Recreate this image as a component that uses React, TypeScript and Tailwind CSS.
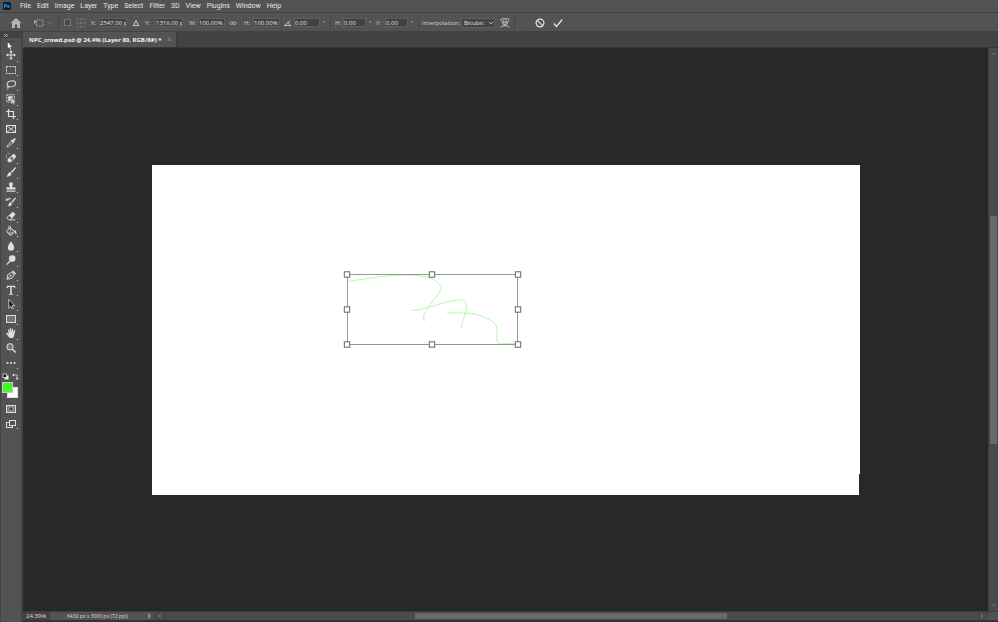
import React, { useState } from "react";

const menus = ["File", "Edit", "Image", "Layer", "Type", "Select", "Filter", "3D", "View", "Plugins", "Window", "Help"];

type IconProps = { children: React.ReactNode; className?: string; box?: string };

function Icon({ children, className = "size-3", box = "0 0 12 12" }: IconProps) {
  return (
    <svg viewBox={box} className={`${className} shrink-0`} fill="none" stroke="currentColor" strokeWidth="1" aria-hidden="true">
      {children}
    </svg>
  );
}

const solid = { fill: "currentColor", stroke: "none" };

const tools: { name: string; flyout: boolean; art: React.ReactNode }[] = [
  {
    name: "Move",
    flyout: true,
    art: (
      <>
        <path d="M6 2v8M2 6h8" />
        <path {...solid} d="M6 1l1.8 2.2H4.2zM6 11l1.8-2.2H4.2zM1 6l2.2-1.8v3.6zM11 6L8.8 4.2v3.6z" />
      </>
    ),
  },
  { name: "Rectangular marquee", flyout: true, art: <rect x="1.5" y="2.5" width="9" height="7" strokeDasharray="2 1" /> },
  {
    name: "Lasso",
    flyout: true,
    art: (
      <>
        <ellipse cx="6.4" cy="4.8" rx="4.3" ry="2.9" transform="rotate(-14 6.4 4.8)" />
        <path d="M3 6.6C1.4 7.3 2 9 3.3 8.4S3.6 6.6 2.8 7M3 8.5c.2 1-.2 1.7-1 2.2" strokeWidth=".8" />
      </>
    ),
  },
  {
    name: "Object selection",
    flyout: true,
    art: (
      <>
        <rect x="1.8" y="1.8" width="7.4" height="7.4" strokeWidth=".9" strokeDasharray="2 .8" />
        <rect {...solid} x="3.2" y="3.2" width="4.4" height="4.6" />
        <path d="M6 5v6.4l1.7-1.6 1.1 2 1.2-.6-1-1.9h2.2z" fill="currentColor" stroke="#535353" strokeWidth=".5" />
      </>
    ),
  },
  { name: "Crop", flyout: true, art: <path d="M3.5 1v7.5H11M1 3.5h7.5V11" strokeWidth="1.2" /> },
  {
    name: "Frame",
    flyout: false,
    art: (
      <>
        <rect x="1.5" y="2.5" width="9" height="7" />
        <path d="M1.5 2.5l9 7M10.5 2.5l-9 7" strokeWidth=".9" />
      </>
    ),
  },
  {
    name: "Eyedropper",
    flyout: true,
    art: (
      <>
        <path d="M2 10l.5-1.7 4-4 1.3 1.3-4 4z" strokeWidth=".9" />
        <path {...solid} d="M5.8 3.3l1-.9.7.7L9 1.6c1-.8 2.2.4 1.4 1.4L8.9 4.500l.7.7-1 1z" />
      </>
    ),
  },
  {
    name: "Spot healing brush",
    flyout: true,
    art: (
      <>
        <rect {...solid} x="1.9" y="4.2" width="9.6" height="4.2" rx="1.6" transform="rotate(-42 6.700 6.300)" />
        <rect x="5.4" y="5" width="2.6" height="2.6" fill="#6b6b6b" stroke="none" transform="rotate(-42 6.700 6.300)" />
        <path d="M1.500 6V3.500A2.200 2.200 0 0 1 5.500 2.300" strokeWidth=".7" strokeDasharray="1 .6" />
      </>
    ),
  },
  {
    name: "Brush",
    flyout: true,
    art: <path {...solid} d="M10.800 1.200c.6.5-.2 1.600-3.800 5.700L5.700 5.700C9.400 2 10.300.900 10.800 1.200zM5.100 6.300l1.300 1.300c.1 2-2 3.400-5 3 1.200-.6 1-1.200 1.400-2.500.3-1.200 1.300-1.800 2.300-1.800z" />,
  },
  {
    name: "Clone stamp",
    flyout: true,
    art: <path {...solid} d="M6 1.200c1.200 0 2 .9 2 1.900 0 1.100-.9 1.600-.9 3.100h2.400c.7 0 1 .4 1 1v1.300h-9V7.200c0-.6.3-1 1-1h2.400C4.900 4.700 4 4.200 4 3.100c0-1 .8-1.900 2-1.900zM1.500 9.500h9v1.200h-9z" />,
  },
  {
    name: "History brush",
    flyout: true,
    art: (
      <>
        <path {...solid} d="M10.900 1.600c.4.500-.3 1.500-3.500 5.200L6.300 5.700C9.500 2.300 10.500 1.200 10.900 1.600zM5.700 6.300l1.200 1.200c0 1.900-1.800 3-4.300 2.700 1.100-.6.9-1.100 1.200-2.200.3-1.100 1-1.700 1.900-1.700z" />
        <path d="M1.200 3.600h3.300M6.300 3.200C5.200 2 3.500 2 2.600 3.300" strokeWidth=".9" />
        <path {...solid} d="M.8 2l.3 3L3.600 4z" />
      </>
    ),
  },
  {
    name: "Eraser",
    flyout: true,
    art: (
      <>
        <path {...solid} d="M7.700 1.700l3 2.600L7.200 8 4 5.300z" />
        <path d="M4 5.300L1.800 7.900l1.900 1.900h1.700L7.200 8zM5 9.900h5.500" strokeWidth=".9" />
      </>
    ),
  },
  {
    name: "Paint bucket",
    flyout: true,
    art: (
      <>
        <path d="M5 2.500l4.700 4-4 4.200L1.400 6.600z" />
        <path d="M2 6.700l7.300-.2-3.600 4z" fill="currentColor" fillOpacity=".45" stroke="none" />
        <path d="M5.600 6V2.200c0-1.600-2.200-1.400-2.200 0v1.600" strokeWidth=".8" />
        <path {...solid} d="M9.400 5c2 .6 2.300 2 1.900 4.700-1.300-.8-1.200-2.400-1.900-4.700z" />
      </>
    ),
  },
  { name: "Blur", flyout: true, art: <path {...solid} d="M6 1.200c1.500 2.500 3.200 4.200 3.200 6.200a3.200 3.200 0 0 1-6.400 0c0-2 1.700-3.700 3.200-6.200z" /> },
  {
    name: "Dodge",
    flyout: true,
    art: (
      <>
        <circle {...solid} cx="7.200" cy="4.600" r="3.300" />
        <path d="M5 7l-3.300 3.600" strokeWidth="1.300" />
      </>
    ),
  },
  {
    name: "Pen",
    flyout: true,
    art: (
      <>
        <path d="M2 10.200l.8-4.600L6.500 3.200 9.200 6 6.800 9.400z" />
        <path d="M2.200 10l3.300-3.300" strokeWidth=".8" />
        <circle {...solid} cx="5.700" cy="6.500" r=".9" />
        <path {...solid} d="M6.700 2.500l1.200-1.200 3.200 3.100L9.800 5.700z" />
      </>
    ),
  },
  { name: "Type", flyout: true, art: <path {...solid} d="M1.800 1.800h8.400v2.500h-.8c-.2-1.100-.5-1.400-1.500-1.400H6.800v6.400c0 .5.3.7 1.300.8v.7H3.900v-.7c1-.1 1.300-.3 1.300-.8V2.900H4.100c-1 0-1.300.3-1.500 1.400h-.8z" /> },
  { name: "Path selection", flyout: true, art: <path d="M3.700 1.300v8.900l2.100-2 1.300 2.700 1.300-.6-1.300-2.700h2.700z" fill="#161616" strokeWidth=".8" /> },
  { name: "Rectangle", flyout: true, art: <rect x="1.500" y="2.500" width="9" height="7" fill="#747474" /> },
  {
    name: "Hand",
    flyout: true,
    art: <path {...solid} d="M4.800 11C3.600 9.700 2.300 7.900 1.300 6.700c-.4-.8.600-1.300 1.300-.6l1.100 1L3 3.100c-.1-.9 1-1.100 1.200-.2l.7 2.500-.1-3.600c0-1 1.200-1 1.300 0l.3 3.500.6-3.200c.2-.9 1.300-.7 1.200.2l-.3 3.400 1.100-2.200c.4-.8 1.400-.4 1.100.5C9.500 6 9.700 9 7.900 11z" />,
  },
  {
    name: "Zoom",
    flyout: false,
    art: (
      <>
        <circle cx="5" cy="4.800" r="3.200" fill="#777" />
        <path d="M7.400 7.200l3.300 3.400" strokeWidth="1.500" />
      </>
    ),
  },
  {
    name: "Edit toolbar",
    flyout: true,
    art: (
      <>
        <circle {...solid} cx="2.500" cy="6" r="1.100" />
        <circle {...solid} cx="6" cy="6" r="1.100" />
        <circle {...solid} cx="9.500" cy="6" r="1.100" />
      </>
    ),
  },
];

function Flyout() {
  return <span className="absolute right-[3px] bottom-px size-px bg-[#d0d0d0]" />;
}

function Field({ label, name, initial, labelWidth, width }: { label: React.ReactNode; name: string; initial: string; labelWidth: string; width: string }) {
  const [value, setValue] = useState(initial);
  return (
    <label className="flex shrink-0 items-center">
      <span className={`${labelWidth} flex shrink-0 items-center`}>{label}</span>
      <input
        aria-label={name}
        value={value}
        onChange={(e) => setValue(e.target.value)}
        className={`${width} h-[9px] border border-[#5e5e5e] bg-[#424242] leading-[7px] text-[#e4e4e4] outline-none`}
      />
    </label>
  );
}

function Divider({ className = "" }: { className?: string }) {
  return <span className={`${className} h-4 w-px shrink-0 bg-[#474747]`} />;
}

function Degree() {
  return <span className="w-[10px] shrink-0 pl-[3px]">°</span>;
}

function Angle() {
  return (
    <Icon className="size-2" box="0 0 8 8">
      <path d="M7.500 6.500h-7l5.700-5M4 3.500c1.200.8 1.500 1.700 1.500 3" strokeWidth=".9" />
    </Icon>
  );
}

function OptionsBar() {
  return (
    <form className="flex h-5 shrink-0 items-center overflow-hidden border-y border-[#424242] bg-[#535353] pt-px pl-[10px] text-[6px] leading-[8px] whitespace-nowrap text-[#cfcfcf]" onSubmit={(e) => e.preventDefault()}>
      <button type="button" aria-label="Home" className="w-6 shrink-0 text-[#b5b5b5]">
        <Icon>
          <path {...solid} d="M6 1l5.500 5H10v5H7.200V7.500H4.800V11H2V6H.500z" />
        </Icon>
      </button>
      <button type="button" aria-label="Transform presets" className="flex w-6 shrink-0 items-center gap-1 text-[#a8a8a8]">
        <Icon className="h-2 w-[10px]" box="0 0 10 8">
          <rect x="2.500" y="1" width="6.500" height="6" strokeDasharray="1.500 1" />
          <path {...solid} d="M0 1l3 2-3 2z" />
        </Icon>
        <Icon className="size-1 text-[#777]" box="0 0 4 4">
          <path d="M0 1l2 2 2-2" strokeWidth=".7" />
        </Icon>
      </button>
      <Divider className="mr-[5px]" />
      <input type="checkbox" aria-label="Toggle reference point" className="size-[7px] shrink-0 appearance-none border border-[#777] bg-[#484848] checked:bg-[#aaa]" />
      <button type="button" aria-label="Reference point location" className="ml-[5px] w-[15px] shrink-0 text-[#777]">
        <Icon className="size-[10px]" box="0 0 10 10">
          <path d="M1 1h8v8H1zM1 5h8M5 1v8" strokeWidth=".5" strokeDasharray="1 1" />
          <path d="M.5 1h2M4 1h2M7.500 1h2M.5 9h2M4 9h2M7.500 9h2M.5 5h2M7.500 5h2" />
          <rect {...solid} x="4" y="4" width="2" height="2" />
        </Icon>
      </button>
      <Field label="X:" name="X position" initial="2547.00 p" labelWidth="w-[8px]" width="w-7" />
      <button type="button" aria-label="Relative positioning" className="mx-[5px] shrink-0">
        <Icon className="size-2" box="0 0 8 8">
          <path d="M4 1.500l2.700 5H1.300z" />
        </Icon>
      </button>
      <Field label="Y:" name="Y position" initial="1316.00 p" labelWidth="w-[10px]" width="w-7" />
      <span className="w-[6px] shrink-0" />
      <Field label="W:" name="Width" initial="100.00%" labelWidth="w-[9px]" width="w-[27px]" />
      <button type="button" aria-label="Keep aspect ratio" className="mr-[7px] ml-1 shrink-0 text-[#b4b4b4]">
        <Icon className="size-2" box="0 0 8 8">
          <rect x="1" y="3" width="3" height="2.500" rx="1.200" strokeWidth=".9" />
          <rect x="4.200" y="3" width="3" height="2.500" rx="1.200" strokeWidth=".9" />
        </Icon>
      </button>
      <Field label="H:" name="Height" initial="100.00%" labelWidth="w-[9px]" width="w-[27px]" />
      <Divider className="mr-[2px] ml-px" />
      <Field label={<Angle />} name="Rotation" initial="0.00" labelWidth="w-[10px]" width="w-[26px]" />
      <Degree />
      <Divider className="mr-1" />
      <Field label="H:" name="Horizontal skew" initial="0.00" labelWidth="w-[8px]" width="w-[23px]" />
      <Degree />
      <Field label="V:" name="Vertical skew" initial="0.00" labelWidth="w-[9px]" width="w-[23px]" />
      <Degree />
      <Divider className="mr-[3px]" />
      <label className="flex shrink-0 items-center">
        <span className="w-[39px]">Interpolation:</span>
        <span className="relative flex items-center">
          <select className="h-[10px] w-[34px] appearance-none rounded-[1px] border border-[#5e5e5e] bg-[#444] pl-[2px] leading-[8px] text-[#e4e4e4] outline-none">
            <option>Bicubic</option>
            <option>Bilinear</option>
          </select>
          <span className="pointer-events-none absolute right-[2px]">
            <Icon className="size-1" box="0 0 4 4">
              <path d="M0 1l2 2 2-2" strokeWidth=".8" />
            </Icon>
          </span>
        </span>
      </label>
      <button type="button" aria-label="Warp mode" className="mr-[4px] ml-[5px] shrink-0">
        <Icon className="size-[10px]" box="0 0 10 10">
          <path d="M.5 1.500C3 0 7 0 9.500 1.500 7.800 3 7.800 4 7.500 5.500 6 7 4 7 2.500 5.500 2.200 4 2.200 3 .5 1.500zM2 3.500c2 1 4 1 6 0M4 .5c-.4 2-.4 4 0 6M6 .5c.4 2 .4 4 0 6" strokeWidth=".7" />
          <path d="M.8 9.500c1.500-2.500 6.900-2.500 8.400 0" />
        </Icon>
      </button>
      <Divider className="mr-[20px]" />
      <button type="button" aria-label="Cancel transform" className="mr-2 shrink-0 text-[#e6e6e6]">
        <Icon className="size-[10px]" box="0 0 10 10">
          <circle cx="5" cy="5" r="3.900" strokeWidth="1.200" />
          <path d="M2.300 2.300l5.400 5.400" strokeWidth="1.200" />
        </Icon>
      </button>
      <button type="button" aria-label="Commit transform" className="shrink-0 text-[#e6e6e6]">
        <Icon className="size-[10px]" box="0 0 10 10">
          <path d="M.8 5.500l2.700 3L9.200 1.500" strokeWidth="1.300" />
        </Icon>
      </button>
    </form>
  );
}

function Toolbar() {
  return (
    <aside className="relative flex w-[23px] shrink-0 flex-col border-r-2 border-l border-[#444] bg-[#535353] text-[#dedede]">
      <div className="flex h-[6px] shrink-0 items-center bg-[#424242] pl-[3px]">
        <Icon className="h-[3px] w-1" box="0 0 4 3">
          <path d="M0 0l1.500 1.500L0 3M2.200 0l1.500 1.500L2.200 3" strokeWidth=".7" />
        </Icon>
      </div>
      <div className="mx-[5px] mt-[3px] mb-[6px] h-px shrink-0 bg-[#444]" />
      <div className="flex h-[322px] shrink-0 flex-col">
        {tools.map((tool) => (
          <button key={tool.name} type="button" aria-label={tool.name} className="relative flex flex-1 items-center justify-center">
            <Icon>{tool.art}</Icon>
            {tool.flyout && <Flyout />}
          </button>
        ))}
      </div>
      <div className="mt-[2px] flex h-[8px] shrink-0 items-center gap-[3px] pl-px">
        <button type="button" aria-label="Default colors">
          <Icon className="size-[7px]" box="0 0 7 7">
            <rect x="2.500" y="2.500" width="4" height="4" fill="#eee" stroke="none" />
            <rect x="1" y="1" width="3.500" height="3.500" fill="#111" strokeWidth=".8" />
          </Icon>
        </button>
        <button type="button" aria-label="Swap colors">
          <Icon className="size-[7px]" box="0 0 7 7">
            <path d="M1 2h4v4" strokeWidth=".8" />
            <path {...solid} d="M0 2l2-1.500v3zM5 7L3.500 5h3z" />
          </Icon>
        </button>
      </div>
      <div className="relative mt-[2px] ml-px h-4 w-4 shrink-0">
        <button type="button" aria-label="Background color" className="absolute right-0 bottom-0 size-[11px] border border-[#ddd] bg-white" />
        <button type="button" aria-label="Foreground color" className="absolute top-0 left-0 size-[11px] border border-[#c9c9c9] bg-[#3dfb24]" />
      </div>
      <button type="button" aria-label="Quick mask" className="mt-[5px] flex h-3 shrink-0 items-center justify-center">
        <Icon>
          <rect x="1.500" y="2.500" width="9" height="7" fill="#777" />
          <circle cx="6" cy="6" r="2.300" fill="#4a4a4a" strokeWidth=".6" />
        </Icon>
      </button>
      <button type="button" aria-label="Screen mode" className="relative mt-[3px] flex h-3 shrink-0 items-center justify-center">
        <Icon>
          <rect x="1.500" y="4.500" width="6" height="5" />
          <rect x="4.500" y="2.500" width="6" height="5" fill="#535353" />
        </Icon>
        <Flyout />
      </button>
      <svg viewBox="0 0 6 10" className="pointer-events-none absolute top-[9px] left-[6px] h-[10px] w-[6px]" aria-hidden="true">
        <path d="M.5.5v7.500l1.700-1.500 1 2.500 1.200-.5-1-2.300h2z" fill="#fff" stroke="#222" strokeWidth=".4" />
      </svg>
    </aside>
  );
}

const handles = [
  [7, 5], [92, 5], [178, 5],
  [7, 40], [178, 40],
  [7, 75], [92, 75], [178, 75],
];

function Artboard() {
  return (
    <div className="relative h-[330px] w-[708px] shrink-0 bg-white">
      <svg viewBox="0 0 184 80" className="absolute top-[105px] left-[188px] h-20 w-[184px]" fill="none" role="img" aria-label="Free transform selection">
        <g stroke="#3dfb24" strokeOpacity=".5" strokeWidth=".8">
          <path d="M8 11.500C26 9 44 5 66 5c14 0 21 2 28 5 4 2 8 6 7 9-1 4-11 15-15 22-3 5-3 7-1 10" />
          <path d="M71 40c7 1 14-2 22-4 11-3 19-6 28-6 4 0 6 3 5.500 8-.5 6-4.500 13-5.500 21" />
          <path d="M107 43h20c12 1 20 5 26 9 4 3 4 6 4 10v8c0 3 1 4 3 4 6-.5 12 0 16-1" />
        </g>
        <rect x="7.500" y="4.500" width="170" height="70" stroke="#979797" strokeWidth="1" />
        {handles.map(([x, y]) => (
          <rect key={`${x}-${y}`} x={x - 2.700} y={y - 3.200} width="5.400" height="5.400" fill="#fff" stroke="#666" />
        ))}
      </svg>
      <div className="absolute right-0 bottom-0 h-[21px] w-px bg-[#282828]" />
    </div>
  );
}

export default function App() {
  return (
    <div className="flex h-screen flex-col overflow-hidden bg-[#535353] font-['Open_Sans','Noto_Sans',sans-serif] select-none">
      <nav className="flex h-3 shrink-0 items-center gap-[6px] pl-[3px] font-['Roboto','Noto_Sans',sans-serif] text-[7px] leading-[10px] text-[#e6e6e6]" aria-label="Application menu">
        <svg viewBox="0 0 8 8" className="mr-[3px] size-2" aria-label="Photoshop">
          <rect width="8" height="8" rx="1.500" fill="#001e36" />
          <text x="1" y="5.800" fontSize="5" fontWeight="700" fill="#31a8ff">Ps</text>
        </svg>
        {menus.map((m) => (
          <button key={m} type="button">{m}</button>
        ))}
      </nav>
      <OptionsBar />
      <div className="flex min-h-0 flex-1">
        <Toolbar />
        <main className="flex min-w-0 flex-1 flex-col">
          <div className="flex h-4 shrink-0 border-b border-[#363636] bg-[#424242]">
            <div className="flex w-[154px] items-center gap-[5px] border-r border-[#3a3a3a] bg-[#535353] pl-[6px] text-[6px] leading-[8px] font-bold whitespace-nowrap text-[#f4f4f4]">
              NPC_crowd.psd @ 24.4% (Layer 80, RGB/8#) *
              <button type="button" aria-label="Close document" className="text-[#a0a0a0]">
                <Icon className="size-[5px]" box="0 0 5 5">
                  <path d="M1 1l3 3M4 1L1 4" strokeWidth=".7" />
                </Icon>
              </button>
            </div>
          </div>
          <div className="flex min-h-0 flex-1">
            <section className="flex min-w-0 flex-1 items-center justify-center overflow-hidden bg-[#282828]">
              <Artboard />
            </section>
            <div className="flex w-[10px] shrink-0 flex-col items-center border-l border-[#3c3c3c] bg-[#4a4a4a] py-1 text-[#858585]">
              <Icon className="size-1" box="0 0 4 4">
                <path d="M0 3l2-2 2 2" strokeWidth=".7" />
              </Icon>
              <div className="flex min-h-0 w-full flex-1 flex-col items-center">
                <div className="flex-[160]" />
                <div className="w-[7px] flex-[228] bg-[#696969]" />
                <div className="flex-[159]" />
              </div>
              <Icon className="size-1" box="0 0 4 4">
                <path d="M0 1l2 2 2-2" strokeWidth=".7" />
              </Icon>
            </div>
          </div>
          <footer className="flex h-[11px] shrink-0 items-stretch border-t border-b-2 border-t-[#3c3c3c] border-b-[#343434] bg-[#4a4a4a] text-[6px] leading-[8px] text-[#dedede]">
            <input aria-label="Zoom level" defaultValue="24.39%" className="w-[27px] bg-[#424242] pl-[3px] outline-none" />
            <div className="flex w-[104px] items-center justify-between border-r border-[#444] bg-[#535353] pr-[2px] pl-[17px] whitespace-nowrap">
              <span className="text-[5px]">6432 px x 3000 px (72 ppi)</span>
              <button type="button" aria-label="Status options">
                <Icon className="h-[6px] w-1" box="0 0 4 6">
                  <path d="M1 .5L3 3 1 5.500" strokeWidth=".8" />
                </Icon>
              </button>
            </div>
            <div className="flex min-w-0 flex-1 items-center px-1 text-[#8c8c8c]">
              <Icon className="size-1" box="0 0 4 4">
                <path d="M3 0L1 2l2 2" strokeWidth=".8" />
              </Icon>
              <div className="flex h-full min-w-0 flex-1 items-center">
                <div className="flex-[253]" />
                <div className="h-[6px] flex-[312] bg-[#696969]" />
                <div className="flex-[253]" />
              </div>
              <Icon className="size-1" box="0 0 4 4">
                <path d="M1 0l2 2-2 2" strokeWidth=".8" />
              </Icon>
            </div>
            <div className="w-[10px] shrink-0 bg-[#505050]" />
          </footer>
        </main>
      </div>
    </div>
  );
}
